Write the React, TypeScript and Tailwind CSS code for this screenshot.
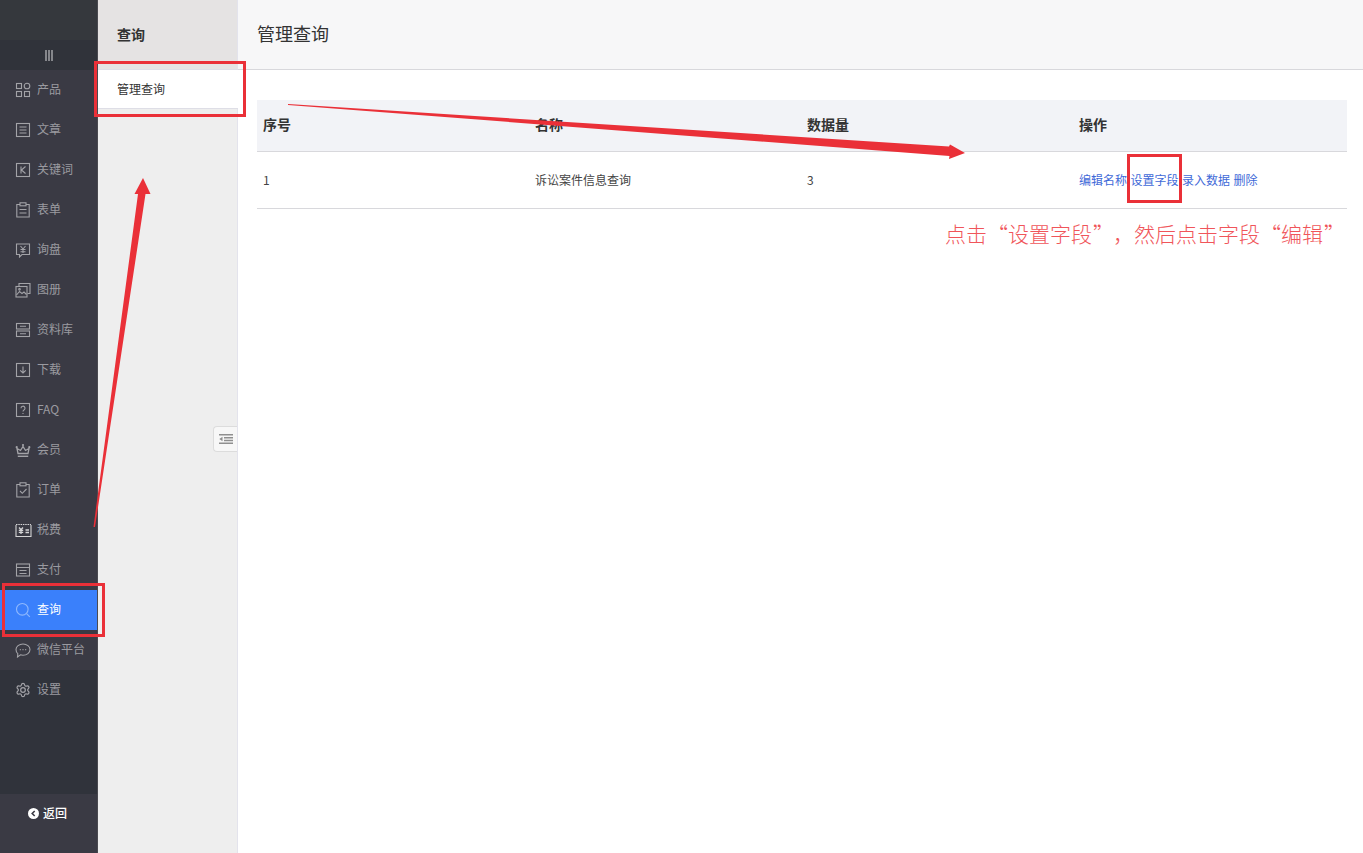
import React from "react";

const S = ({ children, w = 16 }: { children: React.ReactNode; w?: number }) => (
  <svg width={w} height={16} viewBox={`0 0 ${w} 16`} fill="none" stroke="currentColor" strokeWidth="1.1" className="shrink-0">
    {children}
  </svg>
);

const icons: Record<string, React.ReactNode> = {
  产品: (<S><rect x="1.500" y="1.500" width="5" height="5" /><circle cx="12" cy="4" r="2.800" /><rect x="1.500" y="9.500" width="5" height="5" /><rect x="9.500" y="9.500" width="5" height="5" /></S>),
  文章: (<S><rect x="1.500" y="1.500" width="13" height="13" /><path d="M4.500 5h7M4.500 8h7M4.500 11h7" /></S>),
  关键词: (<S><rect x="1.500" y="1.500" width="13" height="13" /><path d="M6 4.500v7M10.500 4.500 6.500 8l4 3.500" /></S>),
  表单: (<S><path d="M5 2.500H1.800v12.500h12.400V2.500H11" /><rect x="5" y="0.800" width="6" height="3" /><path d="M4.500 7.500h7M4.500 11h7" /></S>),
  询盘: (<S><path d="M1.500 2h13v10.500H7l-2.500 2.500v-2.500h-3z" /><path d="M5.500 4l2.500 3 2.500-3M5.500 7.500h5M5.500 9.700h5M8 7v4" /></S>),
  图册: (<S><path d="M4 4V1.500h11v10h-2.500" /><rect x="1" y="4.500" width="11" height="10.500" /><path d="m1.500 13 3-3.500 2.500 2 2-1.500 2.500 2.500" /><circle cx="4.500" cy="7.300" r="0.800" /></S>),
  资料库: (<S><rect x="1.500" y="1.500" width="13" height="5.500" /><rect x="1.500" y="9" width="13" height="5.500" /><path d="M5 4.300h6M5 11.800h6" /></S>),
  下载: (<S><rect x="1.500" y="1.500" width="13" height="13" /><path d="M8 4.500v6.500M5.200 8.300 8 11l2.800-2.700" /></S>),
  FAQ: (<S><rect x="1.500" y="1.500" width="13" height="13" /><path d="M6 6.200a2 2 0 1 1 3 1.700c-.7.400-1 .800-1 1.600M8 11v1" /></S>),
  会员: (<S><path d="M3 11.500 2 6.500l3.500 2L8 4.500l2.500 4 3.500-2-1 5z" strokeWidth="1.300" /><path d="M2.800 14.300h10.400" strokeWidth="1.400" /><circle cx="8" cy="3" r="1.100" fill="currentColor" stroke="none" /><circle cx="1.700" cy="5.200" r="1.100" fill="currentColor" stroke="none" /><circle cx="14.300" cy="5.200" r="1.100" fill="currentColor" stroke="none" /></S>),
  订单: (<S><path d="M5 2.500H1.800v12.500h12.400V2.500H11" /><rect x="5" y="0.800" width="6" height="3" /><path d="m5 9 2.300 2.300L11.500 7" /></S>),
  税费: (<S w={17}><g className="text-[#d4d4d6]" stroke="currentColor"><path d="M1 3v11.500h15V3" /><path d="M1 2.500h15" strokeDasharray="1.500 .8" /><path d="M4 5.500l2 2.300 2-2.300M3.800 8.300h4.400M3.800 10.300h4.400M6 8v4M10.500 8h3.500M10.500 10.500h3.500" strokeWidth="1.300" /></g></S>),
  支付: (<S><rect x="1.500" y="2" width="13" height="12" /><path d="M1.500 5.500h13M4.500 8.500h7M4.500 11.500h7" /></S>),
  查询: (<S><circle cx="7.300" cy="7.300" r="5.800" /><path d="m11.600 11.600 3.200 3.200" /></S>),
  微信平台: (<S><path d="M8 2c3.900 0 7 2.500 7 5.600s-3.100 5.600-7 5.600c-.9 0-1.700-.1-2.500-.4L2.500 15l.3-3.300C1.700 10.700 1 9.200 1 7.600 1 4.500 4.100 2 8 2z" /><path d="M4.800 7.600h1M7.500 7.600h1M10.200 7.600h1" /></S>),
  设置: (
    <svg width={16} height={16} viewBox="0 0 24 24" fill="none" stroke="currentColor" strokeWidth="1.800" strokeLinecap="round" strokeLinejoin="round" className="shrink-0">
      <path d="M9.671 4.136a2.340 2.340 0 0 1 4.659 0 2.340 2.340 0 0 0 3.319 1.915 2.340 2.340 0 0 1 2.330 4.033 2.340 2.340 0 0 0 0 3.831 2.340 2.340 0 0 1-2.330 4.033 2.340 2.340 0 0 0-3.319 1.915 2.340 2.340 0 0 1-4.659 0 2.340 2.340 0 0 0-3.320-1.915 2.340 2.340 0 0 1-2.330-4.033 2.340 2.340 0 0 0 0-3.831A2.340 2.340 0 0 1 6.350 6.051a2.340 2.340 0 0 0 3.319-1.915" />
      <circle cx="12" cy="12" r="3.500" />
    </svg>
  ),
};

const names = ["产品", "文章", "关键词", "表单", "询盘", "图册", "资料库", "下载", "FAQ", "会员", "订单", "税费", "支付", "查询"];

function NavItem({ name, active, bg }: { name: string; active?: boolean; bg?: string }) {
  return (
    <div className={`h-10 flex items-center pl-[15px] gap-[6px] ${active ? "bg-[#3a80fb] text-[#ffffff]" : "text-[#9a9aa0]"} ${bg ?? ""}`}>
      <span className={`w-4 h-4 flex ${active ? "text-[#8fb8fd]" : "text-[#a3a3a8]"}`}>{icons[name]}</span>
      <span className="text-[12px] leading-4 mb-[2px]">{name}</span>
    </div>
  );
}

export default function App() {
  const row = "grid grid-cols-[272px_272px_272px_1fr]";
  return (
    <div className="relative w-full h-[853px] overflow-hidden flex bg-white font-['Noto_Sans_CJK_SC','Noto_Sans',sans-serif]">
      <aside className="w-[98px] shrink-0 h-full flex flex-col bg-[#30333b] border-r border-[#4a4a50]">
        <div className="h-10 bg-[#35383d]" />
        <div className="h-[30px] bg-[#30333a] flex items-center justify-center gap-[1px]">
          <i className="w-[2px] h-[11px] bg-[#85878b]" /><i className="w-[2px] h-[11px] bg-[#85878b]" /><i className="w-[2px] h-[11px] bg-[#85878b]" />
        </div>
        <div className="bg-[#3a3a44]">
          {names.map((n) => <NavItem key={n} name={n} active={n === "查询"} />)}
          <NavItem name="微信平台" />
        </div>
        <NavItem name="设置" />
        <div className="flex-1" />
        <div className="h-[59px] bg-[#3a3a44] flex items-start justify-center pt-[10px] pr-[2px] gap-[4px] text-white">
          <span className="mt-[4px] w-[11px] h-[11px] rounded-full bg-white flex items-center justify-center">
            <svg width="7" height="7" viewBox="0 0 7 7" fill="none" stroke="#3a3a44" strokeWidth="1.600"><path d="M4.700 1 2.200 3.500 4.700 6" /></svg>
          </span>
          <span className="text-[12px] leading-[18px] font-medium">返回</span>
        </div>
      </aside>

      <div className="w-[140px] shrink-0 h-full flex flex-col bg-[#eeeeee] border-r border-[#e3e3ec] relative">
        <div className="h-[69px] bg-[#e5e3e3] pl-[19px] pt-[25px] text-[14px] leading-[18px] font-bold text-[#333333]">查询</div>
        <div className="h-[40px] -mr-px bg-white border-y border-[#dedee6] pl-[19px] flex items-center text-[12px] text-[#333333] relative z-10">管理查询</div>
        <div className="absolute right-0 top-[426px] w-[24px] h-[26px] bg-[#f7f7f7] border border-r-0 border-[#dcdcdc] rounded-l-[4px] flex items-center justify-center">
          <svg width="14" height="10" viewBox="0 0 14 10" fill="none" stroke="#8f8f8f" strokeWidth="1.500">
            <path d="M0 .8h14M5 3.800h9M5 6.400h9M0 9.300h14" />
            <path d="M3.500 2.800 .3 5l3.200 2.200z" fill="#8f8f8f" stroke="none" />
          </svg>
        </div>
      </div>

      <main className="flex-1 h-full flex flex-col">
        <header className="h-[70px] shrink-0 bg-[#f7f7f8] border-b border-[#d8d8dc] pl-[19px] flex items-center text-[18px] text-[#333333] pb-[2px]">管理查询</header>
        <div className="pt-[30px] pl-[19px] pr-[16px]">
          <div className={`${row} h-[52px] bg-[#f2f3f7] border-b border-[#d8d8dc] items-center text-[14px] font-bold text-[#333333] pb-[2px]`}>
            <div className="pl-[6px]">序号</div>
            <div className="pl-[6px]">名称</div>
            <div className="pl-[6px]">数据量</div>
            <div className="pl-[6px]">操作</div>
          </div>
          <div className={`${row} h-[57px] border-b border-[#d8d8dc] items-center text-[12px] text-[#444444]`}>
            <div className="pl-[6px]">1</div>
            <div className="pl-[6px]">诉讼案件信息查询</div>
            <div className="pl-[6px]">3</div>
            <div className="pl-[6px] text-[#3f6ad8] whitespace-nowrap flex gap-[3.500px]">
              <span>编辑名称</span><span>设置字段</span><span>录入数据</span><span>删除</span>
            </div>
          </div>
          <div className="mt-[11px] pr-[3px] flex justify-end text-[21px] leading-[26px] text-[#f0555a] font-light whitespace-nowrap">
            <span>点击</span>
            <span className="inline-block w-[21px] text-right pr-[3px]">“</span>
            <span>设置字段</span>
            <span className="inline-block w-[21px] text-left pl-[1px]">”</span>
            <span className="inline-block w-[21px]">，</span>
            <span>然后点击字段</span>
            <span className="inline-block w-[21px] text-right pr-[3px]">“</span>
            <span>编辑</span>
            <span className="inline-block w-[21px] text-left pl-[1px]">”</span>
          </div>
        </div>
      </main>

      {/* annotation boxes */}
      <div className="absolute left-[94px] top-[61px] w-[152px] h-[56px] border-[3px] border-[#ea3038]" />
      <div className="absolute left-[2px] top-[583px] w-[103px] h-[54px] border-[3px] border-[#ea3038]" />
      <div className="absolute left-[1127px] top-[154px] w-[55px] h-[49px] border-[3px] border-[#ea3038]" />

      {/* annotation arrows */}
      <svg className="absolute inset-0 pointer-events-none" width="1363" height="853" viewBox="0 0 1363 853">
        <polygon fill="#ea3038" points="93.500,527 138,194 134.500,194 143,178 150.500,194 145.500,194 95,527" />
        <polygon fill="#ea3038" points="288,104 949,146.500 950,144.500 965,153 949,159 949.500,156 288,105" />
      </svg>
    </div>
  );
}
